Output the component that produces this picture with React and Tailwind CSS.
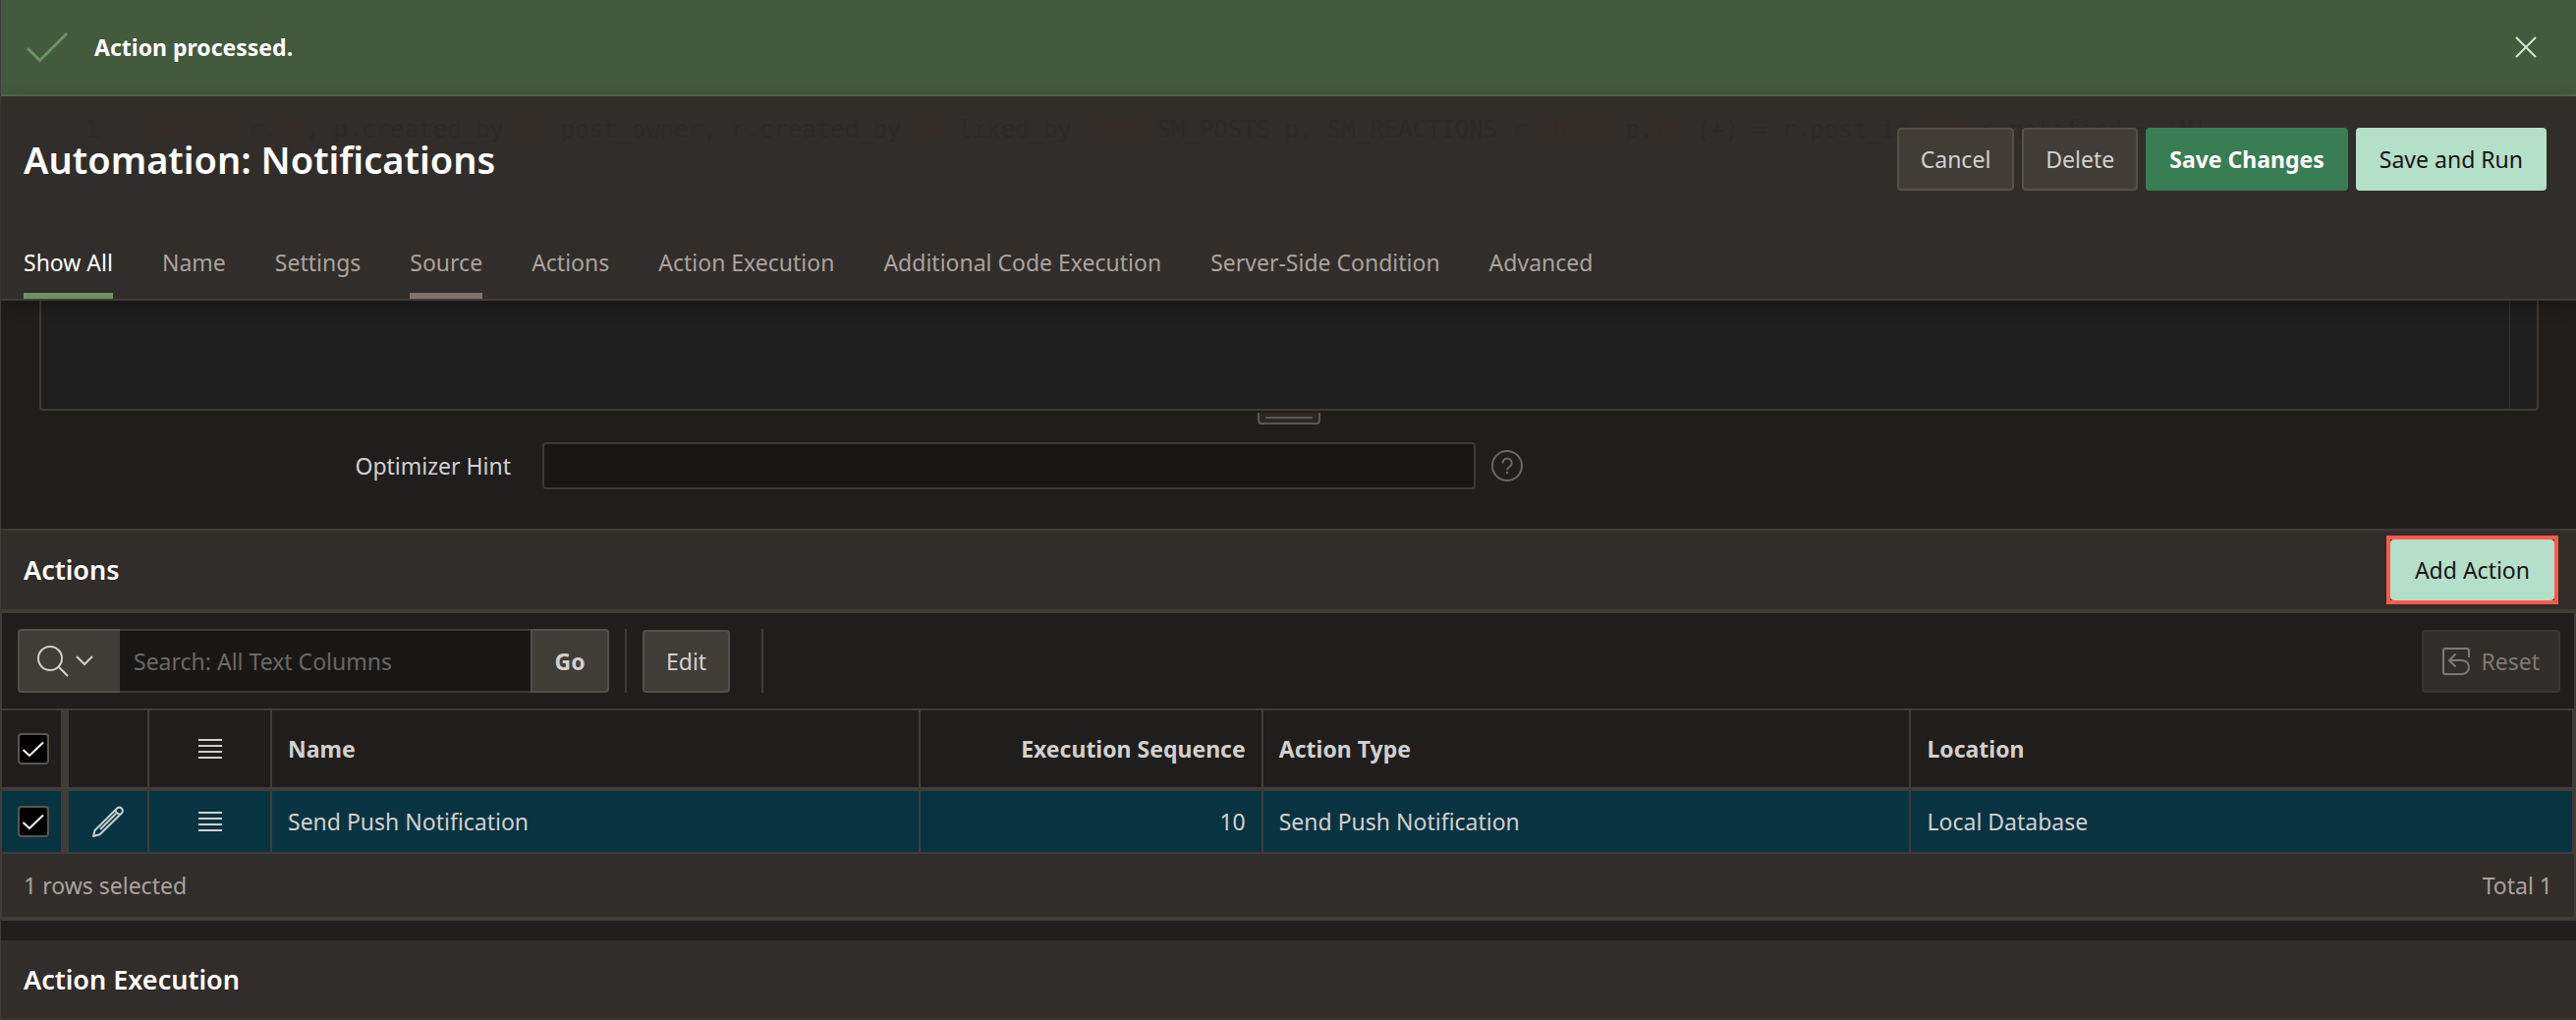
import React from 'react';

const TABS = [
  { label: 'Show All', state: 'active' },
  { label: 'Name' },
  { label: 'Settings' },
  { label: 'Source', state: 'current' },
  { label: 'Actions' },
  { label: 'Action Execution' },
  { label: 'Additional Code Execution' },
  { label: 'Server-Side Condition' },
  { label: 'Advanced' },
];

const TAB_STYLES = {
  active: 'text-white border-[#6b9362]',
  current: 'text-[#a8a39f] border-[#7d736d]',
  idle: 'text-[#a8a39f] border-transparent',
};

const BUTTON_STYLES = {
  plain: 'border-[#544f4a] bg-[#403c38] text-[#d2d0ce]',
  hot: 'border-[#397d54] bg-[#397d54] font-bold text-white',
  mint: 'border-[#b4dfc8] bg-[#b4dfc8] text-[#161513]',
};

function Button({ kind = 'plain', children }) {
  return (
    <button
      type="button"
      className={`flex h-16 items-center rounded-[4px] border-2 px-[22px] ${BUTTON_STYLES[kind]}`}
    >
      {children}
    </button>
  );
}

function Banner() {
  return (
    <div role="status" className="flex h-[98px] items-center border-b-2 border-[#52704b] bg-[#435a3d] pr-10 pl-[25px]">
      <svg width="44" height="32" viewBox="0 0 44 32" fill="none" stroke="#6b9362" strokeWidth="3" className="shrink-0">
        <path d="M2 17 14.500 29.500 42 2" />
      </svg>
      <p className="ml-[26px] font-bold text-white">Action processed.</p>
      <button type="button" aria-label="Close" className="ml-auto">
        <svg width="22" height="22" viewBox="0 0 22 22" stroke="#dbe0d9" strokeWidth="2">
          <path d="M1 1 21 21M21 1 1 21" />
        </svg>
      </button>
    </div>
  );
}

function Keyword({ children }) {
  return <span className="text-[#372b28]">{children}</span>;
}

function GhostQuery() {
  return (
    <div
      aria-hidden="true"
      className="absolute top-[22px] left-[86px] flex gap-[50px] font-['DejaVu_Sans_Mono',monospace] text-[24px] leading-6 whitespace-pre text-[#2c2a28]"
    >
      <span>1</span>
      <span>
        <Keyword>SELECT</Keyword> r.<Keyword>id</Keyword>, p.created_by <Keyword>as</Keyword> post_owner, r.created_by{' '}
        <Keyword>as</Keyword> liked_by <Keyword>from</Keyword> SM_POSTS p, SM_REACTIONS r <Keyword>where</Keyword> p.
        <Keyword>id</Keyword> (+) = r.post_id <Keyword>and</Keyword> r.notified = 'N'
      </span>
    </div>
  );
}

function PageHeader() {
  return (
    <header className="relative z-10 border-b-2 border-[#403c38] bg-[#312d2a] shadow-[0_4px_16px_rgba(0,0,0,0.3)]">
      <GhostQuery />
      <div className="relative flex items-center justify-between pt-8 pr-[30px] pl-[23px]">
        <h1 className="text-[38px] leading-9 font-semibold text-white">Automation: Notifications</h1>
        <div className="flex gap-2">
          <Button>Cancel</Button>
          <Button>Delete</Button>
          <Button kind="hot">Save Changes</Button>
          <Button kind="mint">Save and Run</Button>
        </div>
      </div>
      <nav aria-label="Page sections" className="mt-9 flex gap-[50px] pl-[23px]">
        {TABS.map((tab) => (
          <a
            key={tab.label}
            href="#"
            className={`flex h-[74px] items-center border-b-6 pt-[6px] ${TAB_STYLES[tab.state || 'idle']}`}
          >
            {tab.label}
          </a>
        ))}
      </nav>
    </header>
  );
}

function SourceRegion() {
  return (
    <section aria-label="Source" className="pb-10">
      <div className="mr-[38px] ml-[39px] flex h-28 rounded-b-[4px] border-2 border-t-0 border-[#3d3a36] bg-[#1e1e1e]">
        <textarea aria-label="SQL query" className="grow resize-none bg-transparent outline-none" />
        <div className="w-7 border-l border-[#333231]" />
      </div>
      <div className="mx-auto mt-[2px] h-3 w-16 rounded-b-[4px] border-2 border-t-0 border-[#5a5753] bg-[#2a2725] px-[6px] pt-1">
        <div className="h-[2px] bg-[#5a5753]" />
      </div>
      <div className="mt-[18px] flex h-12 items-center">
        <label htmlFor="optimizer-hint" className="w-[519px] text-right text-[#d2d0ce]">
          Optimizer Hint
        </label>
        <input
          id="optimizer-hint"
          type="text"
          className="ml-8 h-12 w-[950px] rounded-[4px] border-2 border-[#3d3a34] bg-[#191715] px-3 text-[#d2d0ce] outline-none"
        />
        <button type="button" aria-label="Help: Optimizer Hint" className="ml-4">
          <svg width="32" height="32" viewBox="0 0 32 32" fill="none" stroke="#6a6866" strokeWidth="2">
            <circle cx="16" cy="16" r="15" />
            <path d="M11.500 13.500V13a4.600 4.600 0 1 1 7 4c-1.600 1.200-2.500 1.800-2.500 3.500M16 22v2.200" />
          </svg>
        </button>
      </div>
    </section>
  );
}

function Toolbar() {
  return (
    <div className="flex items-center justify-between py-4 pr-[14px] pl-4">
      <div className="flex items-center">
        <button
          type="button"
          aria-label="Select columns to search"
          className="flex h-[65px] w-[104px] items-center gap-[7px] rounded-l-[4px] border-2 border-r-0 border-[#544f4a] bg-[#403c38] pl-[18px]"
        >
          <svg width="32" height="32" viewBox="0 0 32 32" fill="none" stroke="#d2d0ce" strokeWidth="2">
            <circle cx="13" cy="13" r="12" />
            <path d="M21.500 21.500 31 31" />
          </svg>
          <svg width="18" height="11" viewBox="0 0 18 11" fill="none" stroke="#d2d0ce" strokeWidth="2">
            <path d="M1 1 9 9 17 1" />
          </svg>
        </button>
        <input
          type="search"
          aria-label="Search: All Text Columns"
          placeholder="Search: All Text Columns"
          className="h-[65px] w-[418px] border-y-2 border-[#3d3a34] bg-[#191715] pl-[14px] text-[#d2d0ce] outline-none placeholder:text-[#6a6866]"
        />
        <button
          type="button"
          className="flex h-[65px] w-[80px] items-center justify-center rounded-r-[4px] border-2 border-[#544f4a] bg-[#403c38] font-bold text-[#d2d0ce]"
        >
          Go
        </button>
        <div className="ml-4 h-[65px] w-[2px] bg-[#403c38]" />
        <div className="ml-4">
          <Button>Edit</Button>
        </div>
        <div className="ml-8 h-[65px] w-[2px] bg-[#403c38]" />
      </div>
      <button
        type="button"
        disabled
        className="flex h-16 items-center gap-[11px] rounded-[4px] border-2 border-[#3a3532] bg-[#312d2a] px-[19px] text-[#7c7976]"
      >
        <svg width="28" height="28" viewBox="0 0 28 28" fill="none" stroke="#7c7976" strokeWidth="2">
          <path d="M27 10V3a2 2 0 0 0-2-2H3a2 2 0 0 0-2 2v22a2 2 0 0 0 2 2h17a7 7 0 0 0 0-14H7M13.500 6.500 7 13l6.500 6.500" />
        </svg>
        Reset
      </button>
    </div>
  );
}

function CheckBox({ label }) {
  return (
    <label className="relative ml-4 block size-8">
      <input
        type="checkbox"
        defaultChecked
        aria-label={label}
        className="block size-8 appearance-none rounded-[4px] border-2 border-[#5a544f] bg-black"
      />
      <svg width="32" height="32" viewBox="0 0 32 32" fill="none" stroke="#fff" strokeWidth="2" className="pointer-events-none absolute inset-0">
        <path d="M5.500 17 12 23 26 9.500" />
      </svg>
    </label>
  );
}

function RowMenuIcon() {
  return (
    <svg width="24" height="20" viewBox="0 0 24 20" fill="#d2d0ce">
      <path d="M0 0h24v2H0zM0 6h24v2H0zM0 12h24v2H0zM0 18h24v2H0z" />
    </svg>
  );
}

function PencilIcon() {
  return (
    <svg width="32" height="32" viewBox="0 0 32 32" fill="none" stroke="#c5d0d3" strokeWidth="2" strokeLinejoin="round">
      <path d="M1 31 2.500 25 25.500 2.200a3.500 3.500 0 0 1 4.800 4.800L7.500 29.300ZM23.500 4.200c.3 2.700 1.700 4.100 4.600 4.600M24 8 8 24" />
    </svg>
  );
}

function ActionsGrid() {
  const head = 'border-r-2 border-b-4 border-[#403c38] px-4';
  const cell = 'border-r-2 border-b-2 border-[#403c38] px-4';
  return (
    <table className="w-full table-fixed border-separate border-spacing-0 border-t-2 border-[#403c38] text-left text-[#d2d0ce]">
      <colgroup>
        <col className="w-[68px]" />
        <col className="w-[82px]" />
        <col className="w-[125px]" />
        <col className="w-[25.2%]" />
        <col className="w-[349px]" />
        <col className="w-[25.2%]" />
        <col />
      </colgroup>
      <thead>
        <tr className="h-[82px]">
          <th className="border-r-8 border-b-4 border-[#403c38] p-0">
            <CheckBox label="Select all rows" />
          </th>
          <th className={head} aria-label="Edit" />
          <th className={head}>
            <button type="button" aria-label="Selection actions" className="mx-auto block">
              <RowMenuIcon />
            </button>
          </th>
          <th className={head}>Name</th>
          <th className={`${head} text-right`}>Execution Sequence</th>
          <th className={head}>Action Type</th>
          <th className={head}>Location</th>
        </tr>
      </thead>
      <tbody>
        <tr className="h-16 bg-[#083341]">
          <td className="border-r-8 border-b-2 border-[#403c38] p-0">
            <CheckBox label="Select row" />
          </td>
          <td className={cell}>
            <button type="button" aria-label="Edit row" className="mx-auto block">
              <PencilIcon />
            </button>
          </td>
          <td className={cell}>
            <button type="button" aria-label="Row actions" className="mx-auto block">
              <RowMenuIcon />
            </button>
          </td>
          <td className={cell}>Send Push Notification</td>
          <td className={`${cell} text-right`}>10</td>
          <td className={cell}>Send Push Notification</td>
          <td className={cell}>Local Database</td>
        </tr>
      </tbody>
    </table>
  );
}

export default function App() {
  return (
    <div className="min-h-screen border-l border-[#403c38] bg-[#201e1c] font-['Noto_Sans',sans-serif] text-[23px] leading-8">
      <Banner />
      <PageHeader />
      <main>
        <SourceRegion />
        <section aria-labelledby="actions-title">
          <div className="flex h-[86px] items-center justify-between border-t-2 border-b-4 border-[#3d3a34] bg-[#312d2a] pr-[18px] pl-[23px]">
            <h2 id="actions-title" className="text-[27px] font-semibold text-white">
              Actions
            </h2>
            <div className="border-4 border-[#ff5a4a]">
              <button
                type="button"
                className="block h-[62px] rounded-[4px] bg-[#b4dfc8] px-[25px] text-[#161513]"
              >
                Add Action
              </button>
            </div>
          </div>
          <div className="border-r-2 border-b-4 border-l border-[#403c38]">
            <Toolbar />
            <ActionsGrid />
            <div className="flex h-16 items-center justify-between bg-[#312d2a] px-[22px] text-[#a8a39f]">
              <span>1 rows selected</span>
              <span>Total 1</span>
            </div>
          </div>
        </section>
        <section aria-labelledby="execution-title" className="mt-5">
          <div className="flex h-[81px] items-center border-b border-[#403c38] bg-[#312d2a] pl-[23px]">
            <h2 id="execution-title" className="text-[27px] font-semibold text-white">
              Action Execution
            </h2>
          </div>
        </section>
      </main>
    </div>
  );
}
